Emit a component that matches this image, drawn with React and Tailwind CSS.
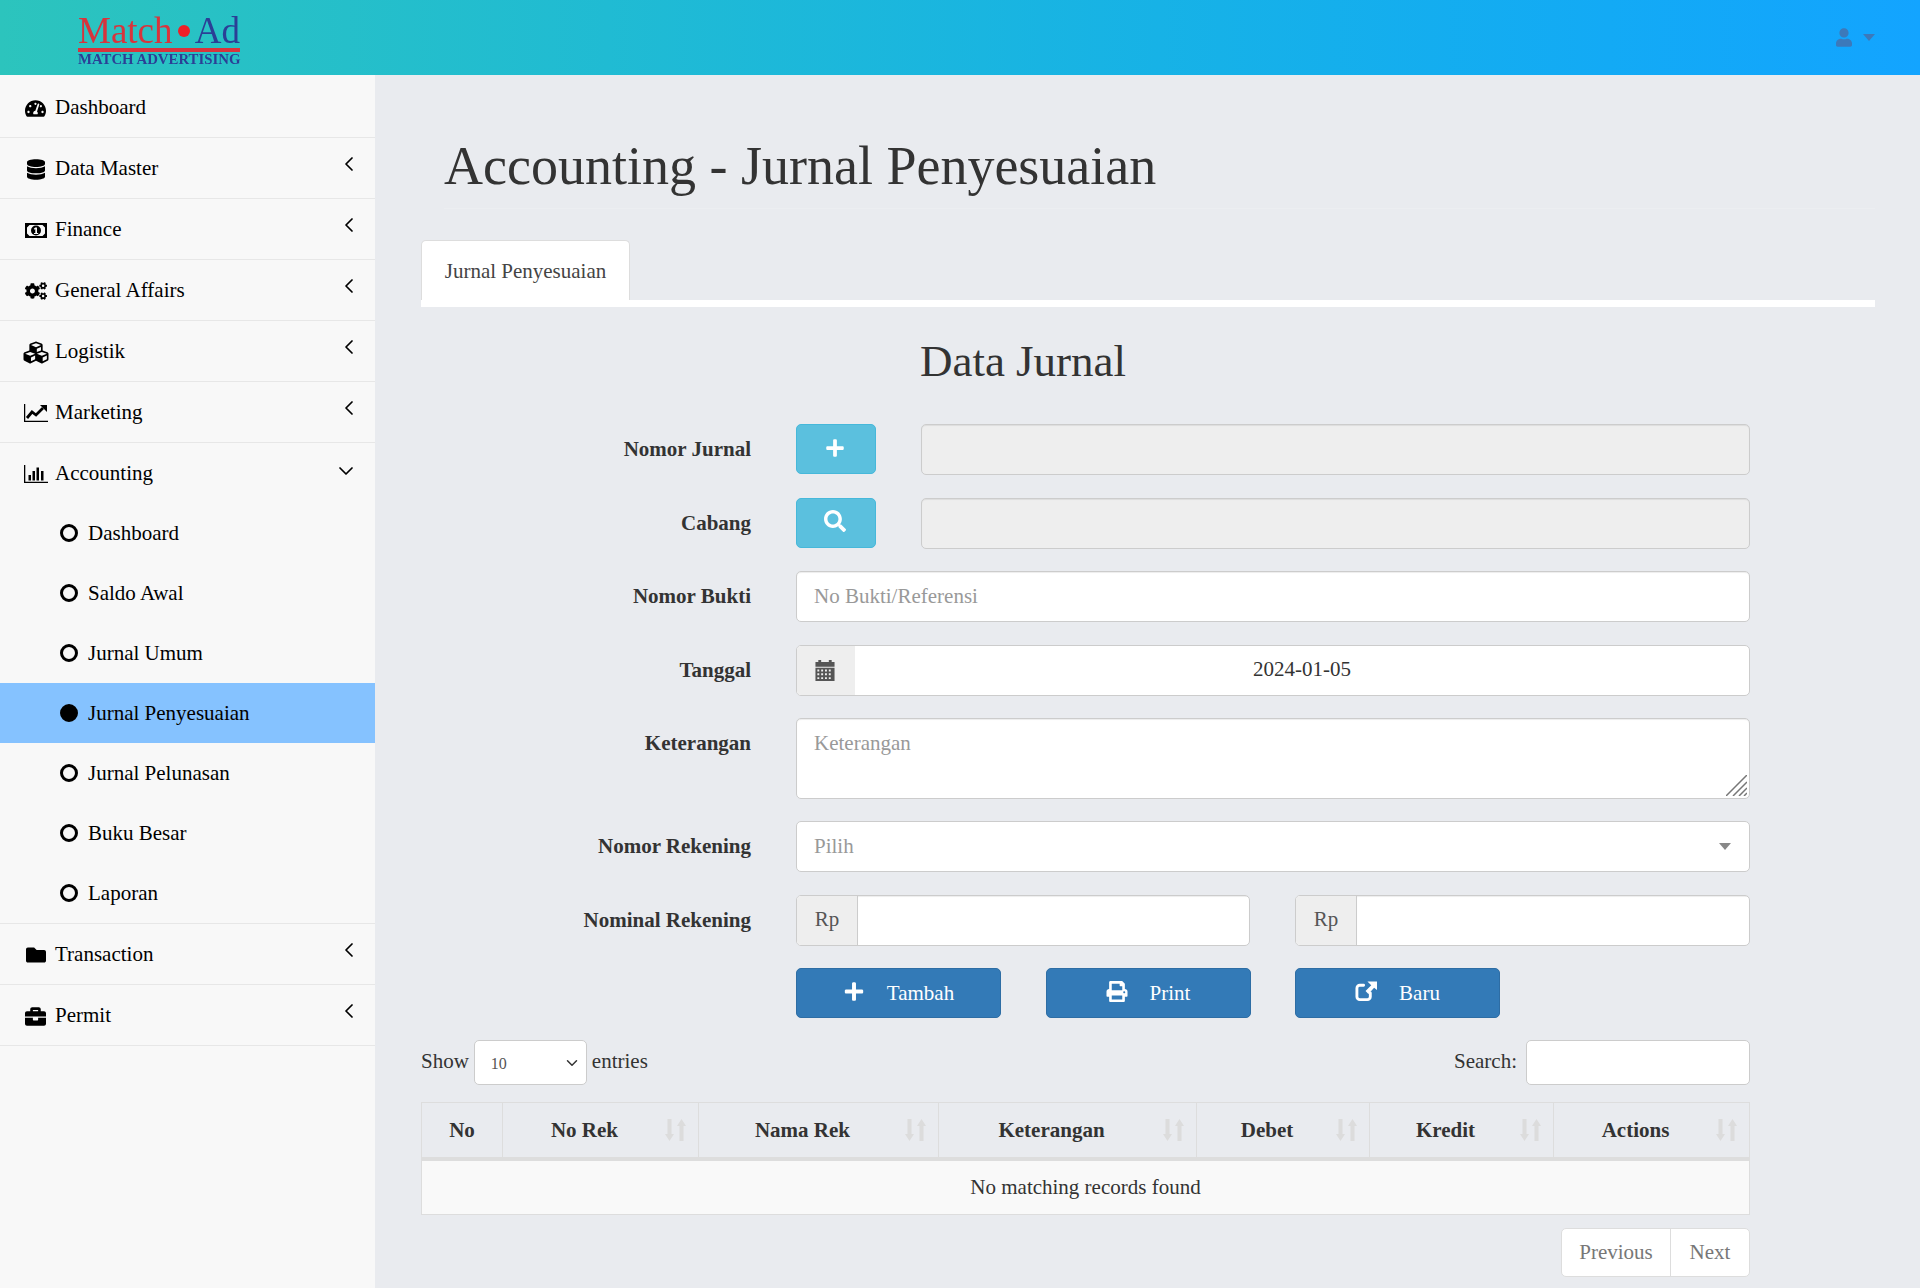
import { useState } from "react"
import {
  FaTachometerAlt, FaDatabase, FaCogs, FaCubes, FaFolder, FaBriefcase, FaPlus, FaSearch, FaPrint, FaUser,
} from "react-icons/fa"
import { ChevronLeft, ChevronDown } from "lucide-react"

function MoneyIcon({ className }) {
  return (
    <svg className={className} viewBox="0 0 22 15">
      <path fillRule="evenodd" d="M0 0h22v15H0zM4.500 2 2 4.500v6L4.500 13h13l2.500-2.500v-6L17.500 2z" />
      <path fillRule="evenodd" d="M11 2.500a5 5 0 1 1 0 10 5 5 0 0 1 0-10zM10.200 4.500 8.800 5.800l.8.900.7-.6V10H9v1h4.200v-1H12V4.500z" />
    </svg>
  )
}

function ChartLineIcon({ className }) {
  return (
    <svg className={className} viewBox="0 0 24 18" fill="none" stroke="currentColor">
      <path d="M.6 0v17.400H24" strokeWidth="1.300" />
      <path d="m3 14 5-6 4 3 7-7" strokeWidth="2.800" />
      <path d="M16 1h7v7z" fill="currentColor" stroke="none" />
    </svg>
  )
}

function ChartBarIcon({ className }) {
  return (
    <svg className={className} viewBox="0 0 24 18">
      <path d="M0 0h1.300v16.700H24V18H0z" />
      <path d="M4.500 10h2.500v5.500H4.500zM8.500 6H11v9.500H8.500zM12.500 2.500H15v13h-2.500zM17 6h2.500v9.500H17z" />
    </svg>
  )
}

function CalendarIcon({ className }) {
  return (
    <svg className={className} viewBox="0 0 20 22" fill="currentColor">
      <path d="M3 0h3v2h8V0h3v2h3v5H0V2h3z" />
      <path fillRule="evenodd" d="M0 8h20v14H0zM2 10v2h2v-2zm4 0v2h2v-2zm4 0v2h2v-2zm4 0v2h2v-2zM2 14v2h2v-2zm4 0v2h2v-2zm4 0v2h2v-2zm4 0v2h2v-2zM2 18v2h2v-2zm4 0v2h2v-2zm4 0v2h2v-2zm4 0v2h2v-2z" />
    </svg>
  )
}

function ShareIcon({ className }) {
  return (
    <svg className={className} viewBox="0 0 23 21" fill="none" stroke="currentColor">
      <path d="M16 12v4a3 3 0 0 1-3 3H5a3 3 0 0 1-3-3V7a3 3 0 0 1 3-3h4" strokeWidth="3" strokeLinecap="round" />
      <path d="M13 0h10v9l-3-2.500-6 6.500-3-3 6-6z" fill="currentColor" stroke="none" />
    </svg>
  )
}

const menuTop = [
  { label: "Dashboard", icon: FaTachometerAlt, size: "h-[21px] w-[21px]", plain: true },
  { label: "Data Master", icon: FaDatabase, size: "h-[21px] w-[18px]" },
  { label: "Finance", icon: MoneyIcon, size: "h-[15px] w-[22px]" },
  { label: "General Affairs", icon: FaCogs, size: "h-[18px] w-[22px]" },
  { label: "Logistik", icon: FaCubes, size: "h-[25px] w-[26px]" },
  { label: "Marketing", icon: ChartLineIcon, size: "h-[18px] w-[24px]" },
]

const subMenu = ["Dashboard", "Saldo Awal", "Jurnal Umum", "Jurnal Penyesuaian", "Jurnal Pelunasan", "Buku Besar", "Laporan"]

const columns = [
  { label: "No", width: "w-[81px]" },
  { label: "No Rek", width: "w-[196px]", sort: true },
  { label: "Nama Rek", width: "w-[240px]", sort: true },
  { label: "Keterangan", width: "w-[258px]", sort: true },
  { label: "Debet", width: "w-[173px]", sort: true },
  { label: "Kredit", width: "w-[184px]", sort: true },
  { label: "Actions", width: "w-[196px]", sort: true },
]

function MenuIcon({ item }) {
  const Icon = item.icon
  return (
    <span className="mr-[4px] flex w-[31px] shrink-0 items-center justify-center">
      <Icon className={item.size} />
    </span>
  )
}

function MenuItem({ item }) {
  return (
    <a className="flex h-[61px] items-center border-b border-[#e7e7e7] pl-[20px] pr-[14px] pt-[2px] text-black">
      <MenuIcon item={item} />
      <span className="flex-1">{item.label}</span>
      {!item.plain && <ChevronLeft className="mb-[10px] h-[24px] w-[24px]" strokeWidth={1.75} />}
    </a>
  )
}

function Logo() {
  return (
    <div className="ml-[78px] mt-[6px] flex w-[162px] flex-col blur-[0.4px]">
      <div className="flex h-[29px] items-center justify-between text-[37px] leading-none">
        <span className="text-[#d8343c]">Match</span>
        <span className="h-[12px] w-[12px] rounded-full bg-[#ee2027]" />
        <span className="text-[#2b3f96]">Ad</span>
      </div>
      <div className="mt-[3px] h-[4px] bg-[#d8343c]" />
      <div className="mt-[2px] whitespace-nowrap text-[14.800px] font-bold leading-[11px] text-[#2b3f96]">MATCH ADVERTISING</div>
    </div>
  )
}

function Sidebar() {
  return (
    <aside className="w-[375px] shrink-0 bg-[#f8f8f8] pt-[2px] text-[21px] text-black">
      {menuTop.map((m) => <MenuItem key={m.label} item={m} />)}
      <div className="border-b border-[#e7e7e7]">
        <a className="flex h-[60px] items-center pl-[20px] pr-[17px] pt-[1px]">
          <MenuIcon item={{ icon: ChartBarIcon, size: "h-[18px] w-[24px]" }} />
          <span className="flex-1">Accounting</span>
          <ChevronDown className="mb-[6px] h-[24px] w-[24px]" strokeWidth={1.75} />
        </a>
        {subMenu.map((s) => {
          const active = s === "Jurnal Penyesuaian"
          return (
            <a key={s} className={`flex h-[60px] items-center pl-[60px] ${active ? "bg-[#85c2ff]" : ""}`}>
              <span className={`mr-[10px] h-[18px] w-[18px] shrink-0 rounded-full border-[3px] border-black ${active ? "bg-black" : ""}`} />
              <span className="pt-[1px]">{s}</span>
            </a>
          )
        })}
      </div>
      <MenuItem item={{ label: "Transaction", icon: FaFolder, size: "h-[20px] w-[20px]" }} />
      <MenuItem item={{ label: "Permit", icon: FaBriefcase, size: "h-[21px] w-[21px]" }} />
    </aside>
  )
}

function FormRow({ label, children }) {
  return (
    <div className="flex gap-[45px]">
      <label className="w-[330px] shrink-0 text-right font-bold leading-[50px]">{label}</label>
      <div className="min-w-0 flex-1">{children}</div>
    </div>
  )
}

const inputCls = "w-full rounded-[5px] border border-[#ccc] px-[17px] shadow-[inset_0_1px_1px_rgba(0,0,0,0.075)] outline-none placeholder:text-[#999]"

function InfoAddon({ icon: Icon, size }) {
  return (
    <div className="flex gap-[45px]">
      <button className="flex h-[50px] w-[80px] shrink-0 items-center justify-center rounded-[5px] border border-[#46b8da] bg-[#5bc0de] text-white">
        <Icon className={`mb-[3px] mr-[2px] ${size}`} />
      </button>
      <input disabled className={`${inputCls} h-[51px] bg-[#eee]`} />
    </div>
  )
}

function RpInput({ className }) {
  return (
    <div className={`flex h-[51px] overflow-hidden rounded-[5px] border border-[#ccc] bg-white ${className}`}>
      <span className="flex w-[61px] shrink-0 items-center justify-center border-r border-[#ccc] bg-[#eee] text-[#555]">Rp</span>
      <input className="min-w-0 flex-1 shadow-[inset_0_1px_1px_rgba(0,0,0,0.075)] outline-none" />
    </div>
  )
}

function ActionButton({ icon: Icon, children }) {
  return (
    <button className="flex h-[50px] w-[205px] items-center justify-center gap-[22px] rounded-[5px] border border-[#2e6da4] bg-[#337ab7] pt-[2px] text-white">
      <Icon className="mb-[5px] h-[21px] w-[22px]" />
      {children}
    </button>
  )
}

function SortIcon() {
  return (
    <svg className="absolute right-[12px] top-[16px]" width="21" height="22" viewBox="0 0 21 22" fill="#dcdcdc">
      <path d="M2.500 0h4v15h2.500l-4.500 7L0 15h2.500z" />
      <path d="M14.500 22h4V7H21l-4.500-7L12 7h2.500z" />
    </svg>
  )
}

function DataTable() {
  return (
    <table className="w-[1328px] table-fixed border-collapse border border-[#ddd]">
      <thead>
        <tr className="h-[56px] border-b-4 border-[#ddd]">
          {columns.map((c) => (
            <th key={c.label} className={`${c.width} relative border-r border-[#ddd] pt-[2px] text-center font-bold ${c.sort ? "pr-[32px]" : ""}`}>
              {c.label}
              {c.sort && <SortIcon />}
            </th>
          ))}
        </tr>
      </thead>
      <tbody>
        <tr className="h-[56px] bg-[#f9f9f9]">
          <td colSpan={7} className="text-center">No matching records found</td>
        </tr>
      </tbody>
    </table>
  )
}

export default function App() {
  const [entries, setEntries] = useState("10")

  return (
    <div className="flex min-h-screen flex-col bg-[#e9ebef] font-['Liberation_Serif',serif] text-[21px] text-[#333]">
      <header className="flex h-[75px] shrink-0 items-center justify-between bg-linear-to-r from-[#2cc4bd] to-[#13a4ff] pr-[45px]">
        <Logo />
        <div className="flex items-center gap-[11px] text-[#3c79ba]">
          <FaUser className="h-[19px] w-[16px]" />
          <svg width="12" height="7" viewBox="0 0 12 7" fill="currentColor"><path d="M0 0h12L6 7z" /></svg>
        </div>
      </header>

      <div className="flex flex-1">
        <Sidebar />

        <main className="flex-1 pl-[46px] pr-[45px]">
          <div className="h-[165px] pl-[23px]">
            <h1 className="h-[134px] border-b border-[#eceef1] pt-[60px] text-[54px] leading-[62px]">Accounting - Jurnal Penyesuaian</h1>
          </div>

          <div className="border-b-[7px] border-white">
            <div className="flex h-[60px] w-[209px] items-center justify-center rounded-t-[5px] border border-b-0 border-[#ddd] bg-white pt-[2px] text-[#444]">Jurnal Penyesuaian</div>
          </div>

          <div className="w-[1329px]">
            <h2 className="h-[117px] pr-[125px] pt-[27px] text-center text-[45px] leading-[54px]">Data Jurnal</h2>

            <div className="flex flex-col gap-[22.500px]">
              <FormRow label="Nomor Jurnal"><InfoAddon icon={FaPlus} size="h-[20px] w-[20px]" /></FormRow>
              <FormRow label="Cabang"><InfoAddon icon={FaSearch} size="h-[22px] w-[22px]" /></FormRow>
              <FormRow label="Nomor Bukti"><input className={`${inputCls} h-[51px] bg-white`} placeholder="No Bukti/Referensi" /></FormRow>
              <FormRow label="Tanggal">
                <div className="flex h-[51px] overflow-hidden rounded-[5px] border border-[#ccc] bg-white">
                  <span className="flex w-[58px] shrink-0 items-center justify-center bg-[#eee] pr-[3px] text-[#555]"><CalendarIcon className="h-[21px] w-[20px]" /></span>
                  <input className="min-w-0 flex-1 text-center outline-none" defaultValue="2024-01-05" />
                </div>
              </FormRow>
              <FormRow label="Keterangan">
                <div className="relative h-[80.500px]">
                  <textarea className={`${inputCls} h-[80.500px] resize-none bg-white py-[9px] leading-[30px]`} placeholder="Keterangan" />
                  <svg className="absolute bottom-[3px] right-[3px]" width="21" height="21" viewBox="0 0 21 21" stroke="#777" strokeWidth="1.500">
                    <path d="M0 21 21 0M7 21 21 7M13 21l8-8M18 21l3-3" />
                  </svg>
                </div>
              </FormRow>
              <FormRow label="Nomor Rekening">
                <div className="flex h-[51px] items-center justify-between rounded-[5px] border border-[#ccc] bg-white pl-[17px] pr-[18px] text-[#999]">
                  Pilih
                  <svg width="12" height="7" viewBox="0 0 12 7" fill="#888"><path d="M0 0h12L6 7z" /></svg>
                </div>
              </FormRow>
              <FormRow label="Nominal Rekening">
                <div className="flex gap-[45px]">
                  <RpInput className="w-[454px]" />
                  <RpInput className="flex-1" />
                </div>
              </FormRow>
              <FormRow label="">
                <div className="flex justify-between pr-[250px]">
                  <ActionButton icon={FaPlus}>Tambah</ActionButton>
                  <ActionButton icon={FaPrint}>Print</ActionButton>
                  <ActionButton icon={ShareIcon}>Baru</ActionButton>
                </div>
              </FormRow>
            </div>

            <div className="mt-[22px] flex h-[45px] justify-between">
              <div className="flex items-center gap-[5px]">
                <span className="mb-[2px]">Show</span>
                <div className="relative">
                  <select value={entries} onChange={(e) => setEntries(e.target.value)} className="h-[45px] w-[113px] appearance-none rounded-[5px] border border-[#ccc] bg-white pl-[16px] pt-[2px] text-[16px] text-[#555]">
                    <option>10</option>
                    <option>25</option>
                    <option>50</option>
                    <option>100</option>
                  </select>
                  <ChevronDown className="pointer-events-none absolute right-[6px] top-[14px] h-[18px] w-[18px] text-[#333]" strokeWidth={2} />
                </div>
                <span className="mb-[2px]">entries</span>
              </div>
              <div className="flex items-center gap-[9px]">
                <span className="mb-[2px]">Search:</span>
                <input className="h-[45px] w-[224px] rounded-[5px] border border-[#ccc] bg-white outline-none" />
              </div>
            </div>

            <div className="mt-[17px]"><DataTable /></div>

            <div className="mt-[13px] flex justify-end pb-[11px]">
              <div className="flex h-[49px] overflow-hidden rounded-[5px] border border-[#ddd] bg-white text-[#777]">
                <a className="flex w-[109px] items-center justify-center border-r border-[#ddd]">Previous</a>
                <a className="flex w-[78px] items-center justify-center">Next</a>
              </div>
            </div>
          </div>
        </main>
      </div>
    </div>
  )
}
